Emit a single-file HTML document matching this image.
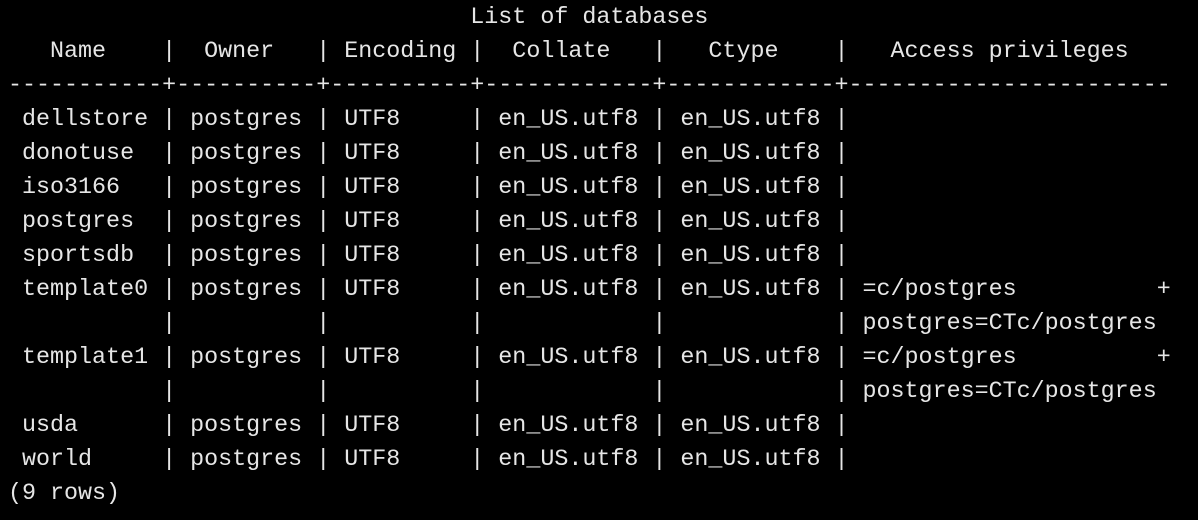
<!DOCTYPE html>
<html><head><meta charset="utf-8"><style>
html,body{margin:0;padding:0;background:#000;width:1198px;height:520px;overflow:hidden}
pre{margin:0;padding:0 0 0 8px;font-family:"Liberation Mono",monospace;font-size:23.35px;line-height:34px;color:#e6e6e6;position:relative;top:1px}
</style></head><body><pre>                                 List of databases
   Name    |  Owner   | Encoding |  Collate   |   Ctype    |   Access privileges
-----------+----------+----------+------------+------------+-----------------------
 dellstore | postgres | UTF8     | en_US.utf8 | en_US.utf8 |
 donotuse  | postgres | UTF8     | en_US.utf8 | en_US.utf8 |
 iso3166   | postgres | UTF8     | en_US.utf8 | en_US.utf8 |
 postgres  | postgres | UTF8     | en_US.utf8 | en_US.utf8 |
 sportsdb  | postgres | UTF8     | en_US.utf8 | en_US.utf8 |
 template0 | postgres | UTF8     | en_US.utf8 | en_US.utf8 | =c/postgres          +
           |          |          |            |            | postgres=CTc/postgres
 template1 | postgres | UTF8     | en_US.utf8 | en_US.utf8 | =c/postgres          +
           |          |          |            |            | postgres=CTc/postgres
 usda      | postgres | UTF8     | en_US.utf8 | en_US.utf8 |
 world     | postgres | UTF8     | en_US.utf8 | en_US.utf8 |
(9 rows)</pre></body></html>
